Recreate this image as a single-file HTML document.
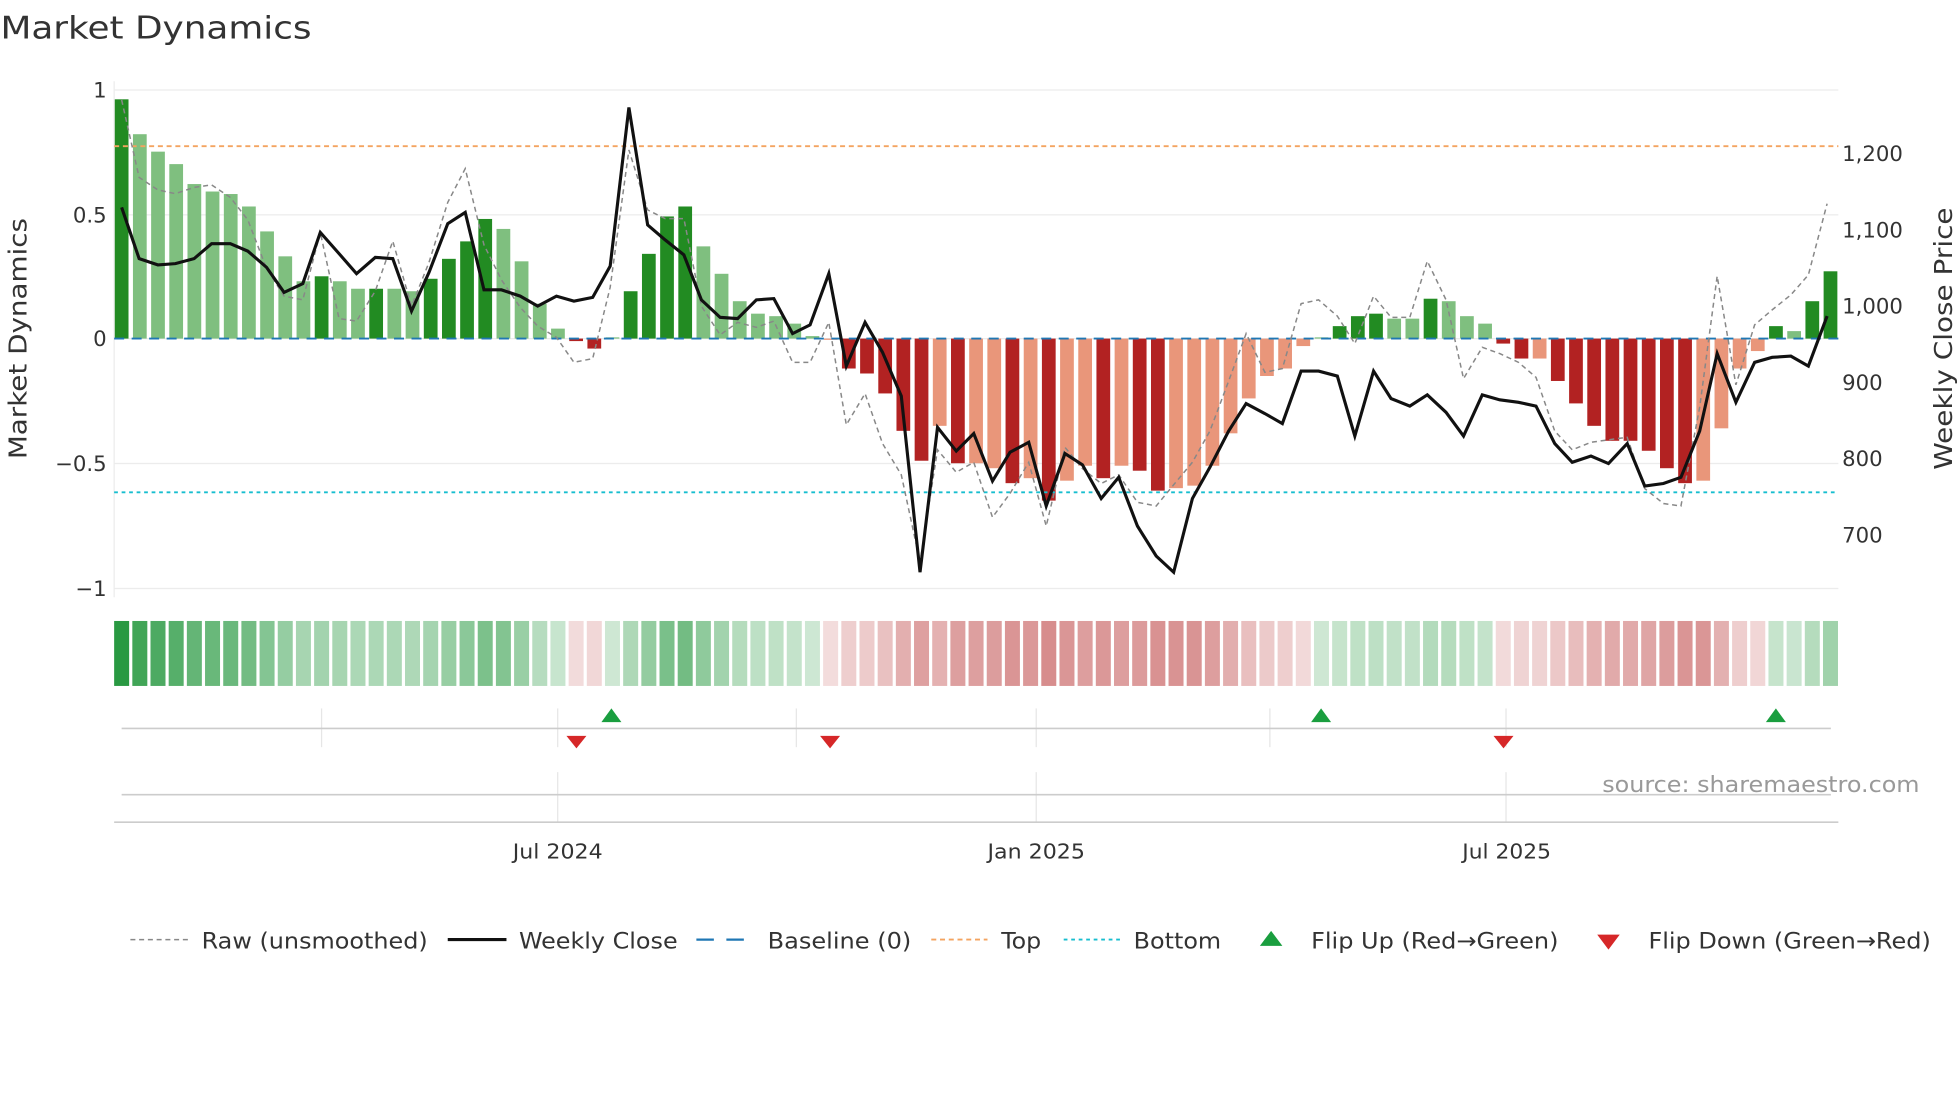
<!DOCTYPE html>
<html><head><meta charset="utf-8"><style>
html,body{margin:0;padding:0;background:#fff;}
svg{display:block;font-family:"DejaVu Sans","Liberation Sans",sans-serif;}
</style></head><body>
<svg id="s" width="1960" height="1102" viewBox="0 0 1568 882" xmlns="http://www.w3.org/2000/svg">
<rect width="1568" height="882" fill="#fff"/>
<text x="0" y="31" font-size="25" fill="#333" textLength="249" lengthAdjust="spacingAndGlyphs">Market Dynamics</text>
<g stroke="#ececec" stroke-width="1">
<line x1="91" y1="72" x2="1471" y2="72"/><line x1="91" y1="172" x2="1471" y2="172"/>
<line x1="91" y1="271" x2="1471" y2="271"/><line x1="91" y1="371" x2="1471" y2="371"/>
<line x1="91" y1="471" x2="1471" y2="471"/>
<line x1="91" y1="65" x2="91" y2="478"/>
</g>
<g font-size="17" fill="#333" text-anchor="end">
<text x="85" y="78">1</text><text x="85" y="178">0.5</text><text x="85" y="277">0</text>
<text x="85" y="377">−0.5</text><text x="85" y="477">−1</text>
</g>
<g font-size="17" fill="#333">
<text x="1474" y="129">1,200</text><text x="1474" y="190">1,100</text><text x="1474" y="251">1,000</text>
<text x="1474" y="312">900</text><text x="1474" y="373">800</text><text x="1474" y="434">700</text>
</g>
<text transform="translate(21,271) rotate(-90)" font-size="20" fill="#333" text-anchor="middle" textLength="193" lengthAdjust="spacingAndGlyphs">Market Dynamics</text>
<text transform="translate(1562,271) rotate(-90)" font-size="20" fill="#333" text-anchor="middle" textLength="210" lengthAdjust="spacingAndGlyphs">Weekly Close Price</text>
<g id="bars"></g>
<line x1="91" y1="117" x2="1471" y2="117" stroke="#f4a460" stroke-width="1.5" stroke-dasharray="4,3"/>
<line x1="91" y1="394" x2="1471" y2="394" stroke="#17becf" stroke-width="1.5" stroke-dasharray="3,3"/>
<line x1="91" y1="271" x2="1471" y2="271" stroke="#1f77b4" stroke-width="1.5" stroke-dasharray="8,6"/>
<polyline id="raw" fill="none" stroke="#888" stroke-width="1.2" stroke-dasharray="4,3"/>
<polyline id="close" fill="none" stroke="#111" stroke-width="2.5"/>
<g id="heat"></g>
<g stroke="#e6e6e6" stroke-width="1">
<line x1="257" y1="567" x2="257" y2="598"/><line x1="446" y1="567" x2="446" y2="598"/>
<line x1="637" y1="567" x2="637" y2="598"/><line x1="829" y1="567" x2="829" y2="598"/>
<line x1="1016" y1="567" x2="1016" y2="598"/><line x1="1205" y1="567" x2="1205" y2="598"/>
<line x1="446" y1="618" x2="446" y2="658"/><line x1="829" y1="618" x2="829" y2="658"/><line x1="1205" y1="618" x2="1205" y2="658"/>
</g>
<line x1="97" y1="583" x2="1465" y2="583" stroke="#ccc" stroke-width="1.3"/>
<line x1="97" y1="636" x2="1465" y2="636" stroke="#ccc" stroke-width="1.3"/>
<line x1="91" y1="658" x2="1471" y2="658" stroke="#ccc" stroke-width="1.3"/>
<g fill="#1a9e3f">
<polygon points="481,578 489,567 497,578"/><polygon points="1049,578 1057,567 1065,578"/><polygon points="1413,578 1421,567 1429,578"/>
</g>
<g fill="#d62728">
<polygon points="453,589 469,589 461,599"/><polygon points="656,589 672,589 664,599"/><polygon points="1195,589 1211,589 1203,599"/>
</g>
<text x="1282" y="634" font-size="18" fill="#999" textLength="254" lengthAdjust="spacingAndGlyphs">source: sharemaestro.com</text>
<g font-size="16" fill="#333">
<text x="410" y="687" textLength="72" lengthAdjust="spacingAndGlyphs">Jul 2024</text>
<text x="790" y="687" textLength="78" lengthAdjust="spacingAndGlyphs">Jan 2025</text>
<text x="1170" y="687" textLength="71" lengthAdjust="spacingAndGlyphs">Jul 2025</text>
</g>
<g font-size="18" fill="#333">
<line x1="104" y1="752" x2="150" y2="752" stroke="#888" stroke-width="1.2" stroke-dasharray="4,3"/>
<text x="161" y="759" textLength="181" lengthAdjust="spacingAndGlyphs">Raw (unsmoothed)</text>
<line x1="358" y1="752" x2="405" y2="752" stroke="#111" stroke-width="2.5"/>
<text x="415" y="759" textLength="127" lengthAdjust="spacingAndGlyphs">Weekly Close</text>
<line x1="557" y1="752" x2="603" y2="752" stroke="#1f77b4" stroke-width="1.8" stroke-dasharray="14,10"/>
<text x="614" y="759" textLength="115" lengthAdjust="spacingAndGlyphs">Baseline (0)</text>
<line x1="745" y1="752" x2="790" y2="752" stroke="#f4a460" stroke-width="1.5" stroke-dasharray="4,3"/>
<text x="801" y="759" textLength="32" lengthAdjust="spacingAndGlyphs">Top</text>
<line x1="851" y1="752" x2="897" y2="752" stroke="#17becf" stroke-width="1.5" stroke-dasharray="3,3"/>
<text x="907" y="759" textLength="70" lengthAdjust="spacingAndGlyphs">Bottom</text>
<polygon points="1008,757 1017,745 1026,757" fill="#1a9e3f"/>
<text x="1049" y="759" textLength="198" lengthAdjust="spacingAndGlyphs">Flip Up (Red→Green)</text>
<polygon points="1278,748 1296,748 1287,760" fill="#d62728"/>
<text x="1319" y="759" textLength="226" lengthAdjust="spacingAndGlyphs">Flip Down (Green→Red)</text>
</g>
</svg>
<script>
var V=[[.96,1],[.82,0],[.75,0],[.70,0],[.62,0],[.59,0],[.58,0],[.53,0],[.43,0],[.33,0],[.23,0],[.25,1],[.23,0],[.20,0],[.20,1],[.20,0],[.19,0],[.24,1],[.32,1],[.39,1],[.48,1],[.44,0],[.31,0],[.14,0],[.04,0],[-.01,1],[-.04,1],[.005,0],[.19,1],[.34,1],[.49,1],[.53,1],[.37,0],[.26,0],[.15,0],[.10,0],[.09,0],[.06,0],[.01,0],[-.005,0],[-.12,1],[-.14,1],[-.22,1],[-.37,1],[-.49,1],[-.35,0],[-.50,1],[-.50,0],[-.52,0],[-.58,1],[-.56,0],[-.65,1],[-.57,0],[-.51,0],[-.56,1],[-.51,0],[-.53,1],[-.61,1],[-.60,0],[-.59,0],[-.51,0],[-.38,0],[-.24,0],[-.15,0],[-.12,0],[-.03,0],[.005,0],[.05,1],[.09,1],[.10,1],[.08,0],[.08,0],[.16,1],[.15,0],[.09,0],[.06,0],[-.02,1],[-.08,1],[-.08,0],[-.17,1],[-.26,1],[-.35,1],[-.41,1],[-.41,1],[-.45,1],[-.52,1],[-.58,1],[-.57,0],[-.36,0],[-.12,0],[-.05,0],[.05,1],[.03,0],[.15,1],[.27,1]];
var ns="http://www.w3.org/2000/svg",b=document.getElementById('bars'),h=document.getElementById('heat');
function el(p,t,a){var e=document.createElementNS(ns,t);for(var k in a)e.setAttribute(k,a[k]);p.appendChild(e);}
function mix(c,t){return 'rgb('+c.map(function(x){return Math.round(255+(x-255)*t)}).join(',')+')';}
V.forEach(function(d,i){var x=97+i*14.55,v=d[0],y0=271,y1=271-v*199.5;
var col=v>=0?(d[1]?'#228b22':'#7fbf7f'):(d[1]?'#b22222':'#e9967a');
el(b,'rect',{x:x-5.5,y:Math.min(y0,y1),width:11,height:Math.max(Math.abs(y1-y0),0.8),fill:col});
var t=0.22+0.78*Math.min(Math.abs(v),1);
var c=v>=0?mix([34,150,60],t):mix([190,70,70],t*0.85);
el(h,'rect',{x:x-6,y:497,width:12,height:52,fill:c});});
var C=[[97,166],[111,207],[126,212],[140,211],[155,207],[169,195],[184,195],[198,201],[213,214],[227,234],[242,227],[256,186],[271,203],[285,219],[300,206],[314,207],[329,249],[343,218],[358,179],[372,170],[387,232],[401,232],[416,237],[430,245],[445,237],[459,241],[474,238],[488,213],[503,86],[518,180],[532,192],[547,204],[561,240],[576,254],[590,255],[605,240],[619,239],[634,267],[648,260],[663,219],[677,293],[692,258],[706,282],[721,317],[736,458],[750,342],[765,361],[779,347],[794,385],[808,362],[823,354],[837,405],[852,363],[866,372],[881,399],[895,382],[910,421],[925,445],[939,458],[954,399],[968,374],[983,345],[997,323],[1012,331],[1026,339],[1041,297],[1055,297],[1070,301],[1084,349],[1099,297],[1113,319],[1128,325],[1142,316],[1157,330],[1171,349],[1186,316],[1200,320],[1215,322],[1229,325],[1244,355],[1258,370],[1273,365],[1287,371],[1302,355],[1316,389],[1331,387],[1345,382],[1360,345],[1374,283],[1389,322],[1404,290],[1418,286],[1433,285],[1447,293],[1462,253]];
var R=[[97,80],[111,142],[126,152],[140,155],[155,150],[169,148],[184,158],[198,176],[213,215],[227,237],[242,240],[256,186],[271,255],[285,257],[300,233],[314,193],[329,245],[343,210],[358,162],[372,135],[387,196],[401,224],[416,246],[430,261],[445,270],[459,290],[474,287],[488,230],[503,120],[518,168],[532,175],[547,175],[561,245],[576,268],[590,258],[605,262],[619,257],[634,290],[648,290],[663,258],[677,340],[692,315],[706,355],[721,380],[736,450],[750,360],[765,378],[779,370],[794,414],[808,395],[823,370],[837,421],[852,358],[866,375],[881,387],[895,380],[910,402],[925,405],[939,388],[954,370],[968,345],[983,305],[997,267],[1012,298],[1026,295],[1041,243],[1055,240],[1070,253],[1084,275],[1099,237],[1113,254],[1128,254],[1142,209],[1157,240],[1171,303],[1186,278],[1200,283],[1215,290],[1229,302],[1244,345],[1258,360],[1273,354],[1287,352],[1302,350],[1316,391],[1331,403],[1345,405],[1360,326],[1374,221],[1389,308],[1404,260],[1418,248],[1433,236],[1447,220],[1462,163]];
document.getElementById('close').setAttribute('points',C.join(' '));
document.getElementById('raw').setAttribute('points',R.join(' '));
</script>
</body></html>
